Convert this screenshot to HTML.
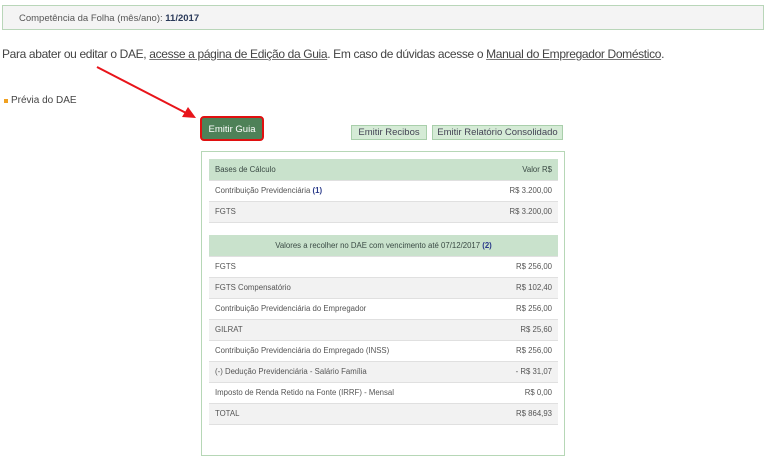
<!DOCTYPE html>
<html><head><meta charset="utf-8"><style>
*{margin:0;padding:0;box-sizing:border-box}
body{width:768px;height:457px;background:#fff;font-family:"Liberation Sans",sans-serif;color:#444;position:relative;overflow:hidden}
.a{position:absolute}
.top{left:2px;top:5px;width:762px;height:25px;border:1px solid #b9d6b9;background:#f4f4f4;font-size:9.5px;color:#555;padding:7px 0 0 16px}
.top b{color:#2a3a5a}
.p{left:2px;top:47px;font-size:12px;color:#444;letter-spacing:-0.35px;white-space:nowrap}
.p u{color:#444;text-decoration:underline;text-decoration-color:#777}
.bul{left:4px;top:99px;width:4px;height:4px;background:#f0a020}
.prev{left:11px;top:95px;font-size:10px;color:#444}
.btn{left:200px;top:116px;width:64px;height:25px;border:2px solid #e01010;border-radius:4px;background:#4e8158;color:#fff;font-size:9.5px;text-align:center;line-height:23px}
.b2{top:125px;height:15px;background:#d5ebd6;border:1px solid #a9cfab;font-size:9.5px;color:#445;text-align:center;line-height:13px}
.panel{left:201px;top:151px;width:364px;height:305px;border:1px solid #b6d7b6}
table{position:absolute;left:209px;width:349px;border-collapse:collapse;font-size:7.8px;color:#555}
td{height:21px;padding:0 6px;border-bottom:1px solid #e0e0e0;background:#fff}
td.r{text-align:right}
tr.g td{background:#f2f2f2}
tr.h td{background:#c9e2cc;color:#3a4a44}
.n{color:#2a3a8a;font-weight:bold}
</style></head><body>
<div class="a top">Competência da Folha (mês/ano): <b>11/2017</b></div>
<div class="a p">Para abater ou editar o DAE, <u>acesse a página de Edição da Guia</u>. Em caso de dúvidas acesse o <u>Manual do Empregador Doméstico</u>.</div>
<div class="a bul"></div>
<div class="a prev">Prévia do DAE</div>
<svg class="a" style="left:0;top:0" width="768" height="457"><line x1="97" y1="67" x2="188" y2="114" stroke="#e8141a" stroke-width="2"/><polygon points="196,118 182,117 188,107" fill="#e8141a"/></svg>
<div class="a btn">Emitir Guia</div>
<div class="a b2" style="left:351px;width:76px">Emitir Recibos</div>
<div class="a b2" style="left:432px;width:131px">Emitir Relatório Consolidado</div>
<div class="a panel"></div>
<table style="top:159px">
<tr class="h"><td>Bases de Cálculo</td><td class="r">Valor R$</td></tr>
<tr><td>Contribuição Previdenciária <span class="n">(1)</span></td><td class="r">R$ 3.200,00</td></tr>
<tr class="g"><td>FGTS</td><td class="r">R$ 3.200,00</td></tr>
</table>
<table style="top:235px">
<tr class="h"><td colspan="2" style="text-align:center">Valores a recolher no DAE com vencimento até 07/12/2017 <span class="n">(2)</span></td></tr>
<tr><td>FGTS</td><td class="r">R$ 256,00</td></tr>
<tr class="g"><td>FGTS Compensatório</td><td class="r">R$ 102,40</td></tr>
<tr><td>Contribuição Previdenciária do Empregador</td><td class="r">R$ 256,00</td></tr>
<tr class="g"><td>GILRAT</td><td class="r">R$ 25,60</td></tr>
<tr><td>Contribuição Previdenciária do Empregado (INSS)</td><td class="r">R$ 256,00</td></tr>
<tr class="g"><td>(-) Dedução Previdenciária - Salário Família</td><td class="r">- R$ 31,07</td></tr>
<tr><td>Imposto de Renda Retido na Fonte (IRRF) - Mensal</td><td class="r">R$ 0,00</td></tr>
<tr class="g"><td>TOTAL</td><td class="r">R$ 864,93</td></tr>
</table>
</body></html>
